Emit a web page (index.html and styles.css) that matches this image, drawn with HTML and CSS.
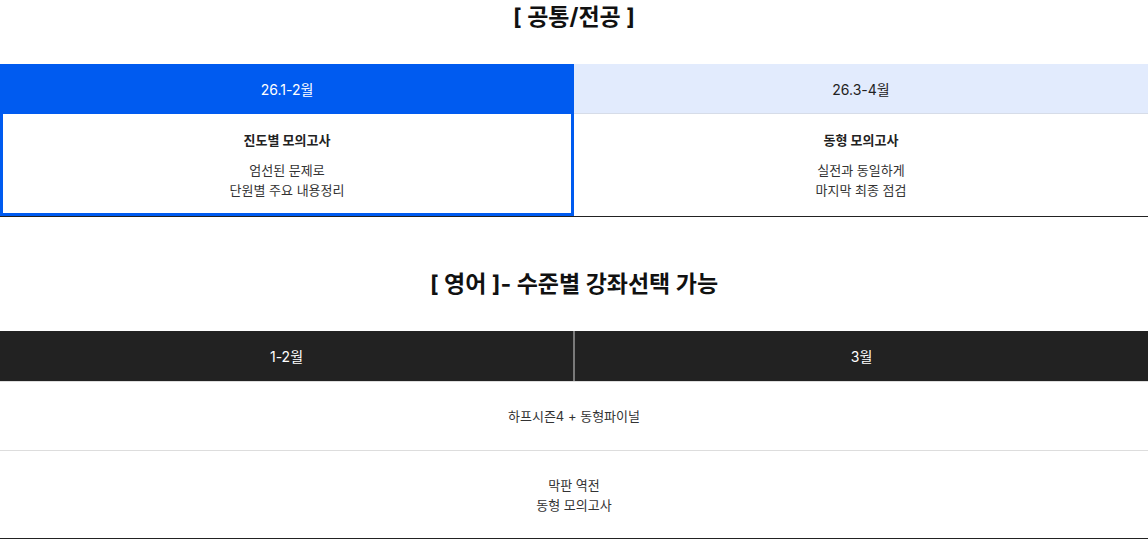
FILE: index.html
```html
<!DOCTYPE html>
<html lang="ko">
<head>
<meta charset="utf-8">
<link rel="stylesheet" href="styles.css">
</head>
<body>
<section class="block">
  <h2 class="title">[ 공통/전공 ]</h2>
  <div class="sched">
    <div class="head">
      <div class="hcell on">26.1-2월</div>
      <div class="hcell">26.3-4월</div>
    </div>
    <div class="body">
      <div class="bcell on">
        <strong class="name">진도별 모의고사</strong>
        <p class="desc">엄선된 문제로<br>단원별 주요 내용정리</p>
      </div>
      <div class="bcell">
        <strong class="name">동형 모의고사</strong>
        <p class="desc">실전과 동일하게<br>마지막 최종 점검</p>
      </div>
    </div>
  </div>
</section>
<section class="block block2">
  <h2 class="title">[ 영어 ]- 수준별 강좌선택 가능</h2>
  <div class="eng">
    <div class="ehead">
      <div class="ecell">1-2월</div>
      <div class="ecell">3월</div>
    </div>
    <div class="erow r1">하프시즌4 + 동형파이널</div>
    <div class="erow r2">막판 역전<br>동형 모의고사</div>
  </div>
</section>
</body>
</html>
```
FILE: styles.css
```css
* { box-sizing: border-box; }
html, body { margin: 0; padding: 0; background: #fff; }
body {
  font-family: Inter, "Noto Sans CJK KR", "Noto Sans", sans-serif;
  color: #222;
  width: 1148px;
}
.block { display: flex; flex-direction: column; }
.block2 { margin-top: 50px; }
.title {
  margin: 0 0 30px;
  height: 34px;
  line-height: 34px;
  font-size: 23px;
  font-weight: 700;
  text-align: center;
  color: #111;
  letter-spacing: 0;
}
.sched { border-bottom: 1px solid #222; }
.head { display: grid; grid-template-columns: 574px 574px; }
.hcell {
  height: 50px;
  display: flex; align-items: center; justify-content: center;
  font-size: 14px;
  background: #e2ebfd;
  color: #222;
  border-bottom: 1px solid #d6dce8;
}
.hcell.on { background: #005bf0; color: #fff; border-bottom: 0; }
.body { display: grid; grid-template-columns: 574px 574px; }
.bcell {
  height: 102px;
  display: flex; flex-direction: column; align-items: center;
  padding-top: 16px;
}
.bcell.on { border: 3px solid #005bf0; border-top: 0; }
.name { font-size: 13px; font-weight: 700; line-height: 20px; color: #222; }
.desc { margin: 10px 0 0; font-size: 13px; line-height: 20px; text-align: center; color: #333; }
.eng { border-bottom: 1px solid #222; }
.ehead { display: grid; grid-template-columns: 573px 575px; background: #222; }
.ecell {
  height: 50px;
  display: flex; align-items: center; justify-content: center;
  color: #fff; font-size: 14px;
}
.ecell + .ecell { border-left: 2px solid #7a7a7a; }
.erow {
  display: flex; align-items: center; justify-content: center;
  text-align: center;
  font-size: 13px; line-height: 20px; color: #333;
  border-top: 1px solid #ddd;
}
.r1 { height: 69px; }
.r2 { height: 88px; }
```
